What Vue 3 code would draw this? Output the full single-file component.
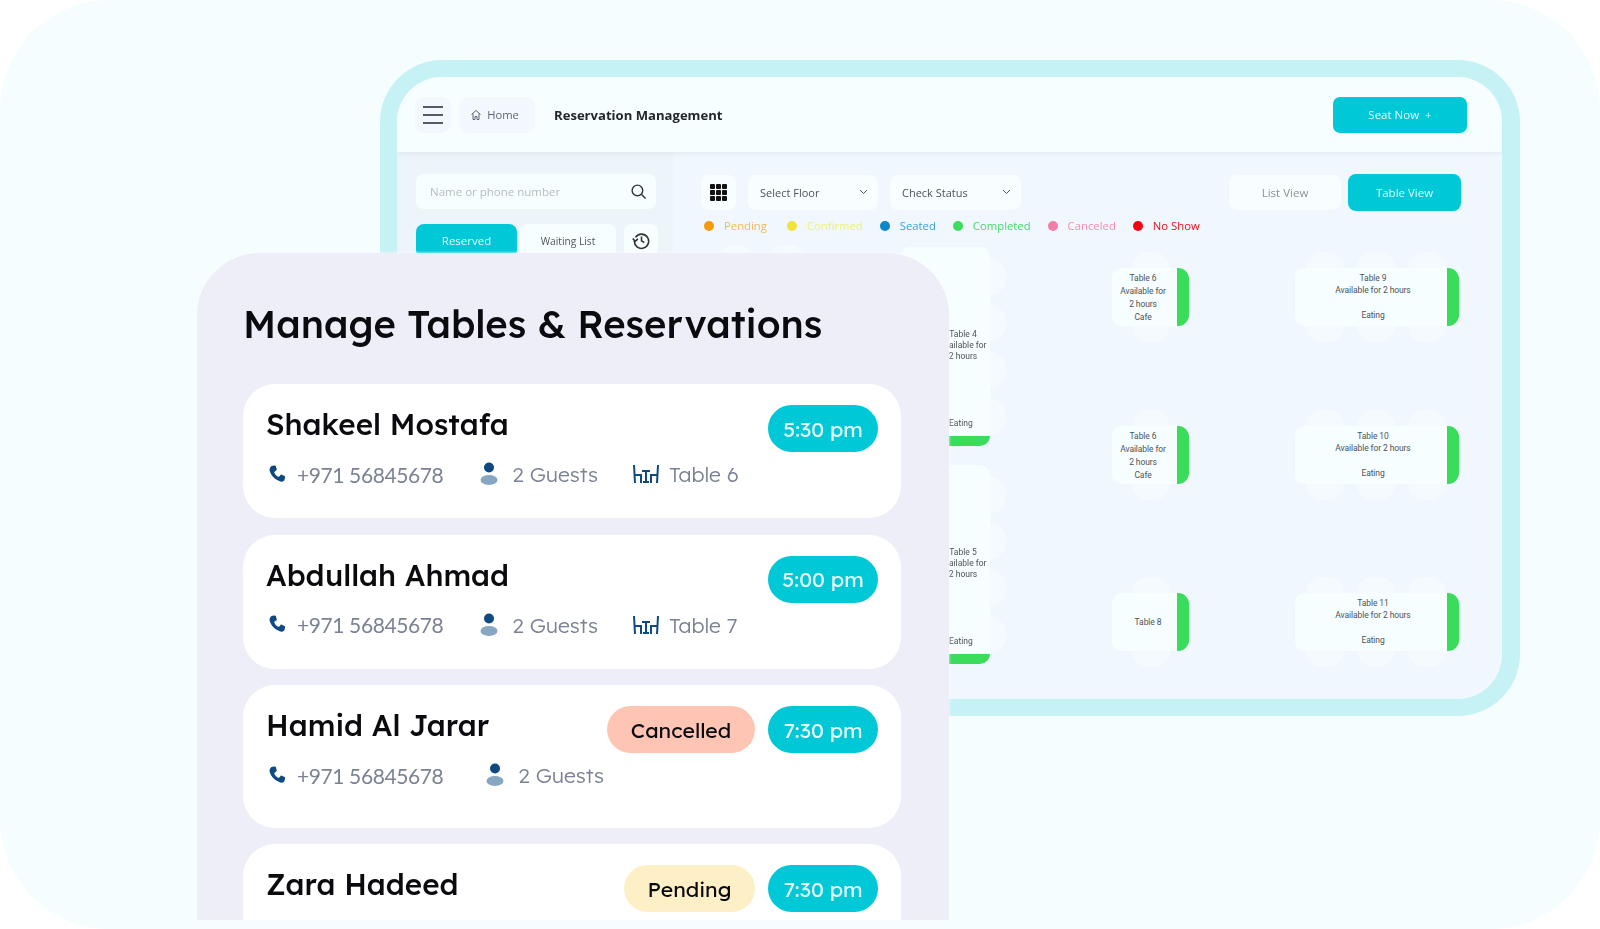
<script setup>
const legend = [
  { label: 'Pending', color: '#f59a0c', text: '#f5b95a' },
  { label: 'Confirmed', color: '#f2e33c', text: '#eef07a' },
  { label: 'Seated', color: '#0b86c8', text: '#3aa0d8' },
  { label: 'Completed', color: '#3ddc5f', text: '#45d96a' },
  { label: 'Canceled', color: '#f080a5', text: '#f08fae' },
  { label: 'No Show', color: '#f2050f', text: '#e5101c' }
]
const tables = [
  { lines: ['Table 6', 'Available for', '2 hours', 'Cafe'], kind: 'small', x: 1112, y: 268 },
  { lines: ['Table 9', 'Available for 2 hours', 'Eating'], kind: 'wide', x: 1295, y: 268 },
  { lines: ['Table 6', 'Available for', '2 hours', 'Cafe'], kind: 'small', x: 1112, y: 426 },
  { lines: ['Table 10', 'Available for 2 hours', 'Eating'], kind: 'wide', x: 1295, y: 426 },
  { lines: ['Table 8'], kind: 'small', x: 1112, y: 593 },
  { lines: ['Table 11', 'Available for 2 hours', 'Eating'], kind: 'wide', x: 1295, y: 593 }
]
const talls = [
  { lines: ['Table 4', 'Available for', '2 hours'], y: 247 },
  { lines: ['Table 5', 'Available for', '2 hours'], y: 465 }
]
const reservations = [
  { name: 'Shakeel Mostafa', time: '5:30 pm', table: 'Table 6', info: true },
  { name: 'Abdullah Ahmad', time: '5:00 pm', table: 'Table 7', info: true },
  { name: 'Hamid Al Jarar', time: '7:30 pm', status: 'Cancelled', long: true, info: true },
  { name: 'Zara Hadeed', time: '7:30 pm', status: 'Pending', long: true, info: false }
]
</script>

<template>
  <div class="page">
    <section class="frame">
      <div class="dash">
        <header class="topbar">
          <button class="soft burger"><span></span><span></span><span></span></button>
          <button class="soft home">
            <svg width="12" height="12" viewBox="0 0 24 24" fill="none" stroke="#5d6570" stroke-width="2"><path d="M3 11 12 3l9 8M6 9v12h4v-6h4v6h4V9"/></svg>
            Home
          </button>
          <h2 class="dash-title">Reservation Management</h2>
          <button class="seat">Seat Now&nbsp; +</button>
        </header>
        <div class="dash-body">
          <aside class="side">
            <div class="search">
              <span>Name or phone number</span>
              <svg width="17" height="17" viewBox="0 0 24 24" fill="none" stroke="#333" stroke-width="2"><circle cx="10.5" cy="10.5" r="7.5"/><path d="m16 16 6 6"/></svg>
            </div>
            <div class="tabs">
              <div class="tab active">Reserved</div>
              <div class="tab">Waiting List</div>
              <div class="tab clock">
                <svg width="19" height="19" viewBox="0 0 24 24" fill="none" stroke="#333" stroke-width="2"><path d="M4.500 8A9 9 0 1 1 3 12.500"/><path d="M1 9.500 4 13l3.500-3M12 7v5.500l3.500 2"/></svg>
              </div>
            </div>
          </aside>
          <main class="floor">
            <div class="tools">
              <div class="tile grid-btn">
                <svg width="17" height="17" viewBox="0 0 17 17" fill="#111"><rect v-for="n in 9" :key="n" :x="(n - 1) % 3 * 6" :y="Math.floor((n - 1) / 3) * 6" width="5" height="5" rx="1"/></svg>
              </div>
              <div class="tile select floor-select">Select Floor
                <svg width="9" height="6" viewBox="0 0 9 6" fill="none" stroke="#555"><path d="m1 1 3.500 3.500L8 1"/></svg>
              </div>
              <div class="tile select status-select">Check Status
                <svg width="9" height="6" viewBox="0 0 9 6" fill="none" stroke="#555"><path d="m1 1 3.500 3.500L8 1"/></svg>
              </div>
              <div class="views">
                <div class="tile view">List View</div>
                <div class="view on">Table View</div>
              </div>
            </div>
            <ul class="legend">
              <li v-for="l in legend" :key="l.label" :style="{ color: l.text }">
                <i :style="{ background: l.color }"></i>{{ l.label }}
              </li>
            </ul>
          </main>
        </div>
      </div>
      <div class="plan">
        <i class="chair top" style="left: 717px; top: 245px"></i>
        <i class="chair top" style="left: 768px; top: 245px"></i>
        <div v-for="t in talls" :key="t.y" class="vtable" :style="{ top: t.y + 'px' }">
          <i class="side-chair" style="top: 12px"></i>
          <i class="side-chair" style="top: 58px"></i>
          <i class="side-chair" style="top: 105px"></i>
          <i class="side-chair" style="top: 152px"></i>
          <div class="vtable-text">
            <p v-for="line in t.lines" :key="line">{{ line }}</p>
          </div>
          <p class="vtable-eat">Eating</p>
          <b class="bar-bottom"></b>
        </div>
        <div
          v-for="(t, i) in tables"
          :key="i"
          class="table"
          :class="t.kind"
          :style="{ left: t.x + 'px', top: t.y + 'px' }"
        >
          <template v-if="t.kind === 'small'">
            <i class="chair top" style="left: 20px"></i>
            <i class="chair bottom" style="left: 20px"></i>
          </template>
          <template v-else>
            <i class="chair top" style="left: 11px"></i>
            <i class="chair top" style="left: 62px"></i>
            <i class="chair top" style="left: 113px"></i>
            <i class="chair bottom" style="left: 11px"></i>
            <i class="chair bottom" style="left: 62px"></i>
            <i class="chair bottom" style="left: 113px"></i>
          </template>
          <div class="table-text" :class="{ single: t.lines.length === 1 }">
            <p v-for="line in t.lines" :key="line">{{ line }}</p>
          </div>
          <b class="bar"></b>
        </div>
      </div>
    </section>

    <section class="panel">
      <h1>Manage Tables &amp; Reservations</h1>
      <div class="cards">
        <article v-for="r in reservations" :key="r.name" class="card" :class="{ long: r.long }">
          <div class="card-head">
            <h3>{{ r.name }}</h3>
            <span v-if="r.status" class="pill" :class="r.status.toLowerCase()">{{ r.status }}</span>
            <span class="pill time">{{ r.time }}</span>
          </div>
          <div v-if="r.info" class="info">
            <span class="item phone">
              <svg width="19" height="19" viewBox="0 0 18 18"><path fill="#0e4a80" d="M4.200.8 6.300.4c.5-.1.9.1 1.100.6l.9 3c.1.400 0 .8-.3 1L6.200 6.300c-.3.300-.4.600-.2 1 .8 1.800 2 3 3.700 3.800.4.200.7.100 1-.2l1.200-1.500c.3-.3.700-.4 1.100-.2l2.700 1.300c.400.2.600.6.500 1l-.5 2.300c-.3 1.400-1.700 2.300-3.200 2C7.300 14.800 2.600 10 1.500 5.300 1.100 3.300 2.500 1.200 4.200.8z"/></svg>
              +971 56845678
            </span>
            <span class="item guests">
              <svg width="18" height="24" viewBox="0 0 18 24"><circle cx="9" cy="5.500" r="5" fill="#0e4a80"/><ellipse cx="9" cy="18" rx="8.500" ry="5" fill="#86a6c2"/></svg>
              2 Guests
            </span>
            <span v-if="r.table" class="item tbl">
              <svg width="28" height="18" viewBox="0 0 28 18" fill="none" stroke="#0e4a80" stroke-width="2"><path d="M2 0l1 18M3 10h6v8M10 6h8M14 6v11M11 17h6M26 0l-1 18M25 10h-6v8"/></svg>
              {{ r.table }}
            </span>
          </div>
        </article>
      </div>
    </section>
  </div>
</template>

<style>
html, body { margin: 0; background: #fff; }
</style>

<style scoped>
* { box-sizing: border-box; }
p, h1, h2, h3, ul { margin: 0; padding: 0; }
button { border: 0; font: inherit; padding: 0; }

.page {
  position: relative;
  width: 1600px;
  height: 929px;
  overflow: hidden;
  background: #f5fdfe;
  border-radius: 110px;
  font-family: "Open Sans", sans-serif;
}

.frame {
  position: absolute;
  left: 380px;
  top: 60px;
  width: 1140px;
  height: 656px;
  border: solid #c6f2f5;
  border-width: 17px 18px 17px 17px;
  border-radius: 62px;
}
.dash {
  height: 100%;
  overflow: hidden;
  border-radius: 45px;
  background: #f0f7fe;
  display: flex;
  flex-direction: column;
  filter: blur(0.35px);
}
.topbar {
  height: 75px;
  flex: none;
  background: #f7feff;
  display: flex;
  align-items: center;
  padding: 0 35px 0 18px;
  box-shadow: 0 2px 4px rgba(120, 140, 160, 0.1);
  position: relative;
}
.soft {
  height: 36px;
  background: #f2f8fd;
  border-radius: 9px;
  display: flex;
  align-items: center;
  justify-content: center;
}
.burger {
  width: 36px;
  flex-direction: column;
  gap: 6px;
}
.burger span {
  width: 20px;
  height: 2px;
  background: #555b60;
}
.home {
  width: 76px;
  margin-left: 8px;
  padding-right: 5px;
  gap: 5px;
  font-size: 11.200px;
  color: #5d6570;
}
.dash-title {
  margin-left: 19px;
  font-size: 13.100px;
  font-weight: 700;
  color: #22272c;
}
.seat {
  margin-left: auto;
  width: 134px;
  height: 36px;
  border-radius: 7px;
  background: #00c8d7;
  color: #e9fbfc;
  font-size: 11.500px;
}

.dash-body {
  flex: 1;
  display: flex;
}
.side {
  width: 276px;
  padding: 21.500px 18px 0 19px;
  background: #edf4fa;
}
.search {
  height: 35px;
  width: 240px;
  padding: 0 9px 0 14px;
  background: #f7feff;
  border-radius: 8px;
  display: flex;
  align-items: center;
  justify-content: space-between;
  font-size: 11.500px;
  color: #b5bcc0;
}
.tabs {
  margin-top: 15px;
  display: flex;
  gap: 7px;
}
.tab {
  flex: none;
  height: 34px;
  width: 96px;
  background: #f7feff;
  border-radius: 8px;
  display: flex;
  align-items: center;
  justify-content: center;
  font-size: 10.200px;
  color: #50565c;
}
.tab.active {
  width: 101px;
  margin-right: -4px;
  background: #00c8d7;
  color: #e4f8fa;
  font-size: 11.500px;
}
.tab.clock { width: 34px; margin-left: 1px; }

.floor {
  flex: 1;
  padding: 21.500px 41px 0 28px;
  min-width: 0;
}
.tools {
  display: flex;
  gap: 12px;
  align-items: center;
}
.tile {
  height: 35px;
  background: #f8feff;
  border-radius: 8px;
  display: flex;
  align-items: center;
}
.grid-btn {
  width: 35px;
  justify-content: center;
}
.select {
  padding: 0 10px 0 12px;
  justify-content: space-between;
  font-size: 11px;
  color: #4d5358;
}
.floor-select { width: 130px; }
.status-select { width: 131px; }
.views {
  margin-left: auto;
  display: flex;
  gap: 7px;
  align-items: center;
}
.view {
  width: 112px;
  justify-content: center;
  font-size: 11.500px;
  color: #8b9298;
}
.view.on {
  width: 113px;
  height: 37px;
  border-radius: 8px;
  background: #00c8d7;
  color: #e4f8fa;
  display: flex;
  align-items: center;
}
.legend {
  margin: 5px 0 0 3px;
  display: flex;
  list-style: none;
  gap: 17px;
  font-size: 11.300px;
  height: 20px;
  align-items: center;
}
.legend li {
  display: flex;
  align-items: center;
  gap: 10px;
}
.legend li:first-child { margin-right: 3px; }
.legend i {
  width: 10px;
  height: 10px;
  border-radius: 50%;
}

.plan {
  position: absolute;
  left: -397px;
  top: -77px;
  width: 0;
  height: 0;
  filter: blur(0.3px);
  font-family: "Roboto", sans-serif;
}
.chair {
  position: absolute;
  display: block;
  width: 38px;
  height: 16px;
  background: #f4fafe;
}
.chair.top { top: -16px; border-radius: 18px 18px 0 0; }
.chair.bottom { bottom: -16px; border-radius: 0 0 18px 18px; }

.table {
  position: absolute;
  height: 58px;
  background: #f7feff;
  border-radius: 9px 13px 13px 9px;
  color: #4d5358;
  font-size: 8.500px;
  text-align: center;
  letter-spacing: -0.1px;
}
.table.small { width: 77px; }
.table.wide { width: 164px; }
.table p { line-height: 13px; white-space: nowrap; }
.table-text {
  height: 100%;
  margin-right: 15px;
  padding-top: 1px;
  display: flex;
  flex-direction: column;
  justify-content: center;
}
.table-text.single { padding-left: 10px; }
.table.wide .table-text {
  margin-right: 12px;
  padding: 5px 0 0 4px;
  justify-content: flex-start;
}
.table.wide .table-text p { line-height: 11.500px; }
.table.wide .table-text p:last-child { margin-top: 14px; }
.bar {
  position: absolute;
  right: 0;
  top: 0;
  bottom: 0;
  width: 12px;
  background: #3bdc5c;
  border-radius: 0 11px 11px 0;
}

.vtable {
  position: absolute;
  left: 900px;
  width: 90px;
  height: 199px;
  background: #f7feff;
  border-radius: 10px 10px 13px 13px;
  color: #4d5358;
  font-size: 8.500px;
}
.side-chair {
  position: absolute;
  left: 90px;
  width: 16px;
  height: 36px;
  background: #f4fafe;
  border-radius: 0 18px 18px 0;
}
.vtable-text {
  position: absolute;
  left: 33px;
  width: 60px;
  top: 82px;
  text-align: center;
}
.vtable-text p { line-height: 11px; white-space: nowrap; }
.vtable-eat {
  position: absolute;
  left: 49px;
  top: 171px;
}
.bar-bottom {
  position: absolute;
  left: 0;
  right: 0;
  bottom: 0;
  height: 10px;
  background: #3bdc5c;
  border-radius: 0 0 13px 13px;
}

.panel {
  position: absolute;
  left: 197px;
  top: 253px;
  width: 752px;
  height: 667px;
  overflow: hidden;
  background: #edeef8;
  border-radius: 62px 62px 0 0;
  padding: 0 48px 0 46px;
  font-family: "Lexend", "Inter", sans-serif;
  box-shadow: 0 0 3px #fff;
}
.panel h1 {
  margin-top: 46px;
  height: 50px;
  font-size: 38.200px;
  line-height: 50px;
  font-weight: 500;
  color: #0a0a0f;
}
.cards {
  margin-top: 35px;
  display: flex;
  flex-direction: column;
  gap: 16.500px;
}
.card {
  flex: none;
  height: 134px;
  background: #fff;
  border-radius: 32px;
  padding: 21px 23px;
}
.card.long { height: 142.500px; }
.card-head {
  display: flex;
  gap: 13px;
  align-items: flex-start;
}
.card-head h3 {
  margin-right: auto;
  font-size: 29.600px;
  line-height: 38px;
  font-weight: 500;
  color: #0a0a0f;
}
.pill {
  height: 47px;
  border-radius: 24px;
  display: flex;
  align-items: center;
  justify-content: center;
  font-size: 21.200px;
  font-weight: 400;
  color: #0a0a0f;
}
.pill.time { width: 110px; background: #00c8d7; color: #e6fbfc; }
.pill.cancelled { width: 148px; background: #fec5b4; }
.pill.pending { width: 131px; background: #fdefc6; }
.info {
  margin-top: 7px;
  height: 30px;
  display: flex;
  align-items: center;
  padding-left: 2px;
  font-size: 21px;
  font-weight: 300;
  color: #7b8294;
}
.item {
  display: flex;
  align-items: center;
}
.phone { gap: 10px; font-family: "Lato", sans-serif; font-weight: 400; letter-spacing: -0.4px; }
.guests { gap: 14px; margin-left: 37px; }
.long .guests { margin-left: 43px; }
.tbl { gap: 9px; margin-left: 34px; }
</style>
